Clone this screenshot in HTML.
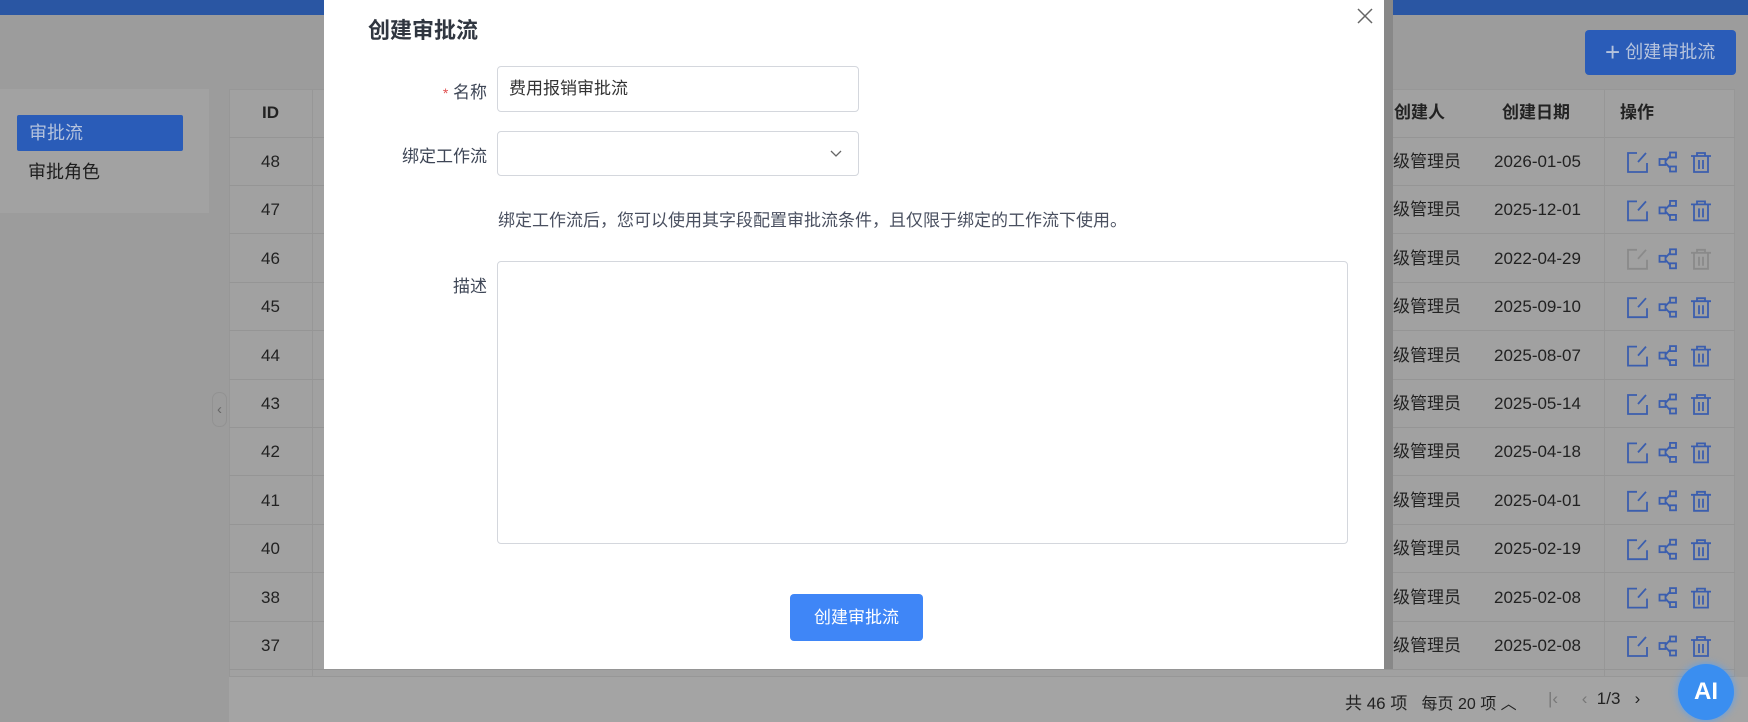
<!DOCTYPE html>
<html><head><meta charset="utf-8"><style>
*{box-sizing:border-box;margin:0;padding:0}
body{width:1748px;height:722px;overflow:hidden;background:#9c9c9c;font-family:"Liberation Sans","Noto Sans CJK SC",sans-serif;position:relative}
.abs{position:absolute}
.top{left:0;top:0;width:1748px;height:15px;background:#2a56a3}
.side{left:0;top:89px;width:209px;height:124px;background:#a2a2a2}
.act{left:17px;top:115px;width:166px;height:36px;background:#2a5cb8;border-radius:2px;color:#b5c3dd;font-size:18px;line-height:36px;padding-left:12px}
.side2{left:28px;top:158px;font-size:18px;color:#1e1e1e}
.tbl{left:229px;top:89px;width:1506px;height:588px;background:#a1a1a1;border:1px solid #979797}
.row{position:absolute;left:229px;width:1506px;height:48px;border-bottom:1px solid #959595;font-size:17px;color:#222}
.row span{position:absolute;top:0;line-height:48px}
.pag{left:229px;top:677px;width:1519px;height:45px;background:#a4a4a4}
.modal{left:324px;top:0;width:1060px;height:669px;background:#fff}
.sb{left:1384px;top:0;width:9px;height:669px;background:#888}
label{position:absolute;font-size:17px;color:#3e4656;text-align:right;width:160px}
.inp{position:absolute;border:1px solid #d4d7dd;border-radius:4px;background:#fff}
.ic{position:absolute}
</style></head><body>
<div class="abs top"></div>
<div class="abs side"></div>
<div class="abs act">审批流</div>
<div class="abs side2">审批角色</div>
<div class="abs" style="left:1585px;top:30px;width:151px;height:45px;background:#2a5cb8;border-radius:4px;color:#b5c3dd;font-size:18px;line-height:45px;padding-left:20px"><span style="font-size:26px;vertical-align:-3px;font-weight:300">+</span>&nbsp;创建审批流</div>
<div class="abs tbl"></div>
<div class="row" style="top:89px;height:49px;font-weight:bold"><span style="left:33px">ID</span><span style="left:1165px">创建人</span><span style="left:1273px">创建日期</span><span style="left:1391px">操作</span></div>
<div class="abs" style="left:312px;top:89px;width:1px;height:588px;background:#979797"></div>
<div class="abs" style="left:1604px;top:89px;width:1px;height:588px;background:#979797"></div>

<div class="row" style="top:138px"><span style="left:32px">48</span><span style="left:1164px">级管理员</span><span style="left:1265px">2026-01-05</span></div>
<div class="row" style="top:186px"><span style="left:32px">47</span><span style="left:1164px">级管理员</span><span style="left:1265px">2025-12-01</span></div>
<div class="row" style="top:235px"><span style="left:32px">46</span><span style="left:1164px">级管理员</span><span style="left:1265px">2022-04-29</span></div>
<div class="row" style="top:283px"><span style="left:32px">45</span><span style="left:1164px">级管理员</span><span style="left:1265px">2025-09-10</span></div>
<div class="row" style="top:332px"><span style="left:32px">44</span><span style="left:1164px">级管理员</span><span style="left:1265px">2025-08-07</span></div>
<div class="row" style="top:380px"><span style="left:32px">43</span><span style="left:1164px">级管理员</span><span style="left:1265px">2025-05-14</span></div>
<div class="row" style="top:428px"><span style="left:32px">42</span><span style="left:1164px">级管理员</span><span style="left:1265px">2025-04-18</span></div>
<div class="row" style="top:477px"><span style="left:32px">41</span><span style="left:1164px">级管理员</span><span style="left:1265px">2025-04-01</span></div>
<div class="row" style="top:525px"><span style="left:32px">40</span><span style="left:1164px">级管理员</span><span style="left:1265px">2025-02-19</span></div>
<div class="row" style="top:574px"><span style="left:32px">38</span><span style="left:1164px">级管理员</span><span style="left:1265px">2025-02-08</span></div>
<div class="row" style="top:622px"><span style="left:32px">37</span><span style="left:1164px">级管理员</span><span style="left:1265px">2025-02-08</span></div>

<svg class="ic" style="left:1627px;top:138px" width="110" height="532" fill="none" stroke-width="1.8">
<g transform="translate(0,14)" stroke="#3b5eae"><path d="M10 1H1v19h19v-9M19 1l-8 9"/><g transform="translate(32,0)"><rect x="0.5" y="7" width="6" height="6"/><rect x="11" y="0.5" width="6" height="5"/><rect x="11" y="14.5" width="6" height="5"/><path d="M6.5 9l4.5-5M6.5 11l4.5 5"/></g><g transform="translate(63,0)"><path d="M1 4h20M7 4V1h8v3M4 4v16h14V4M9 8v9M13 8v9"/></g></g>
<g transform="translate(0,62.4)" stroke="#3b5eae"><path d="M10 1H1v19h19v-9M19 1l-8 9"/><g transform="translate(32,0)"><rect x="0.5" y="7" width="6" height="6"/><rect x="11" y="0.5" width="6" height="5"/><rect x="11" y="14.5" width="6" height="5"/><path d="M6.5 9l4.5-5M6.5 11l4.5 5"/></g><g transform="translate(63,0)"><path d="M1 4h20M7 4V1h8v3M4 4v16h14V4M9 8v9M13 8v9"/></g></g>
<g transform="translate(0,110.8)"><path stroke="#8a8a8a" d="M10 1H1v19h19v-9M19 1l-8 9"/><g stroke="#3b5eae" transform="translate(32,0)"><rect x="0.5" y="7" width="6" height="6"/><rect x="11" y="0.5" width="6" height="5"/><rect x="11" y="14.5" width="6" height="5"/><path d="M6.5 9l4.5-5M6.5 11l4.5 5"/></g><g stroke="#8a8a8a" transform="translate(63,0)"><path d="M1 4h20M7 4V1h8v3M4 4v16h14V4M9 8v9M13 8v9"/></g></g>
<g transform="translate(0,159.2)" stroke="#3b5eae"><path d="M10 1H1v19h19v-9M19 1l-8 9"/><g transform="translate(32,0)"><rect x="0.5" y="7" width="6" height="6"/><rect x="11" y="0.5" width="6" height="5"/><rect x="11" y="14.5" width="6" height="5"/><path d="M6.5 9l4.5-5M6.5 11l4.5 5"/></g><g transform="translate(63,0)"><path d="M1 4h20M7 4V1h8v3M4 4v16h14V4M9 8v9M13 8v9"/></g></g>
<g transform="translate(0,207.6)" stroke="#3b5eae"><path d="M10 1H1v19h19v-9M19 1l-8 9"/><g transform="translate(32,0)"><rect x="0.5" y="7" width="6" height="6"/><rect x="11" y="0.5" width="6" height="5"/><rect x="11" y="14.5" width="6" height="5"/><path d="M6.5 9l4.5-5M6.5 11l4.5 5"/></g><g transform="translate(63,0)"><path d="M1 4h20M7 4V1h8v3M4 4v16h14V4M9 8v9M13 8v9"/></g></g>
<g transform="translate(0,256)" stroke="#3b5eae"><path d="M10 1H1v19h19v-9M19 1l-8 9"/><g transform="translate(32,0)"><rect x="0.5" y="7" width="6" height="6"/><rect x="11" y="0.5" width="6" height="5"/><rect x="11" y="14.5" width="6" height="5"/><path d="M6.5 9l4.5-5M6.5 11l4.5 5"/></g><g transform="translate(63,0)"><path d="M1 4h20M7 4V1h8v3M4 4v16h14V4M9 8v9M13 8v9"/></g></g>
<g transform="translate(0,304.4)" stroke="#3b5eae"><path d="M10 1H1v19h19v-9M19 1l-8 9"/><g transform="translate(32,0)"><rect x="0.5" y="7" width="6" height="6"/><rect x="11" y="0.5" width="6" height="5"/><rect x="11" y="14.5" width="6" height="5"/><path d="M6.5 9l4.5-5M6.5 11l4.5 5"/></g><g transform="translate(63,0)"><path d="M1 4h20M7 4V1h8v3M4 4v16h14V4M9 8v9M13 8v9"/></g></g>
<g transform="translate(0,352.8)" stroke="#3b5eae"><path d="M10 1H1v19h19v-9M19 1l-8 9"/><g transform="translate(32,0)"><rect x="0.5" y="7" width="6" height="6"/><rect x="11" y="0.5" width="6" height="5"/><rect x="11" y="14.5" width="6" height="5"/><path d="M6.5 9l4.5-5M6.5 11l4.5 5"/></g><g transform="translate(63,0)"><path d="M1 4h20M7 4V1h8v3M4 4v16h14V4M9 8v9M13 8v9"/></g></g>
<g transform="translate(0,401.2)" stroke="#3b5eae"><path d="M10 1H1v19h19v-9M19 1l-8 9"/><g transform="translate(32,0)"><rect x="0.5" y="7" width="6" height="6"/><rect x="11" y="0.5" width="6" height="5"/><rect x="11" y="14.5" width="6" height="5"/><path d="M6.5 9l4.5-5M6.5 11l4.5 5"/></g><g transform="translate(63,0)"><path d="M1 4h20M7 4V1h8v3M4 4v16h14V4M9 8v9M13 8v9"/></g></g>
<g transform="translate(0,449.6)" stroke="#3b5eae"><path d="M10 1H1v19h19v-9M19 1l-8 9"/><g transform="translate(32,0)"><rect x="0.5" y="7" width="6" height="6"/><rect x="11" y="0.5" width="6" height="5"/><rect x="11" y="14.5" width="6" height="5"/><path d="M6.5 9l4.5-5M6.5 11l4.5 5"/></g><g transform="translate(63,0)"><path d="M1 4h20M7 4V1h8v3M4 4v16h14V4M9 8v9M13 8v9"/></g></g>
<g transform="translate(0,498)" stroke="#3b5eae"><path d="M10 1H1v19h19v-9M19 1l-8 9"/><g transform="translate(32,0)"><rect x="0.5" y="7" width="6" height="6"/><rect x="11" y="0.5" width="6" height="5"/><rect x="11" y="14.5" width="6" height="5"/><path d="M6.5 9l4.5-5M6.5 11l4.5 5"/></g><g transform="translate(63,0)"><path d="M1 4h20M7 4V1h8v3M4 4v16h14V4M9 8v9M13 8v9"/></g></g>
</svg>

<div class="abs pag"></div>
<div class="abs" style="left:1345px;top:689px;font-size:17px;color:#222">共 46 项 &nbsp; <span style="font-size:16px">每页 20 项 ︿</span></div>
<div class="abs" style="left:1548px;top:689px;font-size:17px;color:#777">|‹ &nbsp;&nbsp;&nbsp; ‹ <span style="color:#222">&nbsp;1/3 &nbsp;&nbsp;›</span></div>
<div class="abs" style="left:1678px;top:664px;width:56px;height:56px;border-radius:50%;background:#3a8ef0;box-shadow:0 0 8px #5aa0f0;color:#fff;font-weight:bold;font-size:24px;line-height:56px;text-align:center">AI</div>
<div class="abs" style="left:212px;top:392px;width:15px;height:35px;border:1px solid #929292;border-radius:7px;color:#666;font-size:15px;line-height:33px;text-align:center">‹</div>

<div class="abs modal">
<div class="abs" style="left:44px;top:13px;font-size:22px;font-weight:bold;color:#303640">创建审批流</div>
<svg class="abs" style="left:1033px;top:8px" width="16" height="16"><path d="M1 1l14 14M15 1L1 15" stroke="#666" stroke-width="1.5"/></svg>
<label style="left:3px;top:78px"><span style="color:#e05050;font-size:14px">*</span> 名称</label>
<div class="inp" style="left:173px;top:66px;width:362px;height:46px;font-size:17px;color:#333;line-height:44px;padding-left:11px">费用报销审批流</div>
<label style="left:3px;top:142px">绑定工作流</label>
<div class="inp" style="left:173px;top:131px;width:362px;height:45px"><svg class="abs" style="left:332px;top:18px" width="12" height="8"><path d="M1 1l5 5 5-5" fill="none" stroke="#666" stroke-width="1.3"/></svg></div>
<div class="abs" style="left:174px;top:206px;font-size:17px;color:#4a5060">绑定工作流后，您可以使用其字段配置审批流条件，且仅限于绑定的工作流下使用。</div>
<label style="left:3px;top:272px">描述</label>
<div class="inp" style="left:173px;top:261px;width:851px;height:283px"></div>
<div class="abs" style="left:466px;top:594px;width:133px;height:47px;background:#3f86f7;border-radius:4px;color:#fff;font-size:17px;line-height:47px;text-align:center">创建审批流</div>
</div>
<div class="abs sb"></div>
</body></html>
